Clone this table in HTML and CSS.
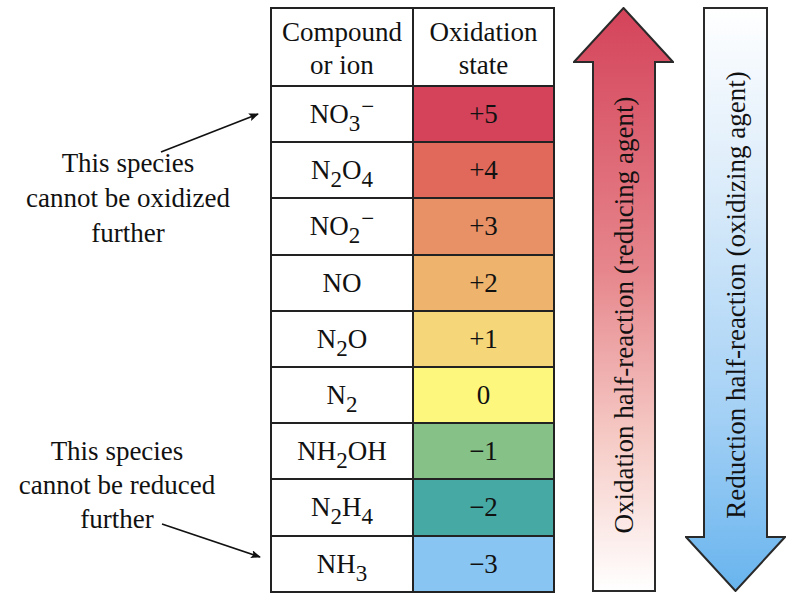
FILE: index.html
```html
<!DOCTYPE html>
<html>
<head>
<meta charset="utf-8">
<link rel="stylesheet" href="styles.css">
</head>
<body>
<div class="page">
  <div class="notes">
    <p class="note note-top">This species<br>cannot be oxidized<br>further</p>
    <p class="note note-bottom">This species<br>cannot be reduced<br>further</p>
  </div>
  <div class="table">
    <div class="cell head"><span class="txt">Compound<br>or ion</span></div>
    <div class="cell head"><span class="txt">Oxidation<br>state</span></div>
    <div class="cell"><span class="txt">NO<span class="sub">3</span><span class="sup">−</span></span></div>
    <div class="cell s5"><span class="txt">+5</span></div>
    <div class="cell"><span class="txt">N<span class="sub">2</span>O<span class="sub">4</span></span></div>
    <div class="cell s4"><span class="txt">+4</span></div>
    <div class="cell"><span class="txt">NO<span class="sub">2</span><span class="sup">−</span></span></div>
    <div class="cell s3"><span class="txt">+3</span></div>
    <div class="cell"><span class="txt">NO</span></div>
    <div class="cell s2"><span class="txt">+2</span></div>
    <div class="cell"><span class="txt">N<span class="sub">2</span>O</span></div>
    <div class="cell s1"><span class="txt">+1</span></div>
    <div class="cell"><span class="txt">N<span class="sub">2</span></span></div>
    <div class="cell s0"><span class="txt">0</span></div>
    <div class="cell"><span class="txt">NH<span class="sub">2</span>OH</span></div>
    <div class="cell m1"><span class="txt">−1</span></div>
    <div class="cell"><span class="txt">N<span class="sub">2</span>H<span class="sub">4</span></span></div>
    <div class="cell m2"><span class="txt">−2</span></div>
    <div class="cell"><span class="txt">NH<span class="sub">3</span></span></div>
    <div class="cell m3"><span class="txt">−3</span></div>
  </div>
  <div class="arrows">
    <div class="arrow arrow-up">
      <svg class="shape" width="101" height="585" viewBox="0 0 101 585">
        <defs>
          <linearGradient id="gup" x1="0" y1="0" x2="0" y2="1">
            <stop offset="0" stop-color="#d4435a"/>
            <stop offset="0.45" stop-color="#e6868c"/>
            <stop offset="0.75" stop-color="#f6cdc8"/>
            <stop offset="1" stop-color="#ffffff"/>
          </linearGradient>
        </defs>
        <polygon points="50.5,1 100,55 82,55 82,584 20,584 20,55 1,55" fill="url(#gup)" stroke="#2a2a2a" stroke-width="2" stroke-linejoin="miter"/>
      </svg>
      <span class="label label-up">Oxidation half-reaction (reducing agent)</span>
    </div>
    <div class="arrow arrow-down">
      <svg class="shape" width="101" height="585" viewBox="0 0 101 585">
        <defs>
          <linearGradient id="gdown" x1="0" y1="0" x2="0" y2="1">
            <stop offset="0" stop-color="#ffffff"/>
            <stop offset="0.3" stop-color="#dcecfa"/>
            <stop offset="0.7" stop-color="#a3d0f5"/>
            <stop offset="1" stop-color="#68b4ee"/>
          </linearGradient>
        </defs>
        <polygon points="19,1 82,1 82,530 100,530 50.5,584 1,530 19,530" fill="url(#gdown)" stroke="#2a2a2a" stroke-width="2" stroke-linejoin="miter"/>
      </svg>
      <span class="label label-down">Reduction half-reaction (oxidizing agent)</span>
    </div>
  </div>
  <svg class="pointers" width="800" height="600" viewBox="0 0 800 600">
    <defs>
      <marker id="head" markerWidth="10" markerHeight="8" refX="9" refY="4" orient="auto" markerUnits="userSpaceOnUse">
        <polygon points="0,0 10,4 0,8 2,4" fill="#111"/>
      </marker>
    </defs>
    <line x1="161" y1="152" x2="258" y2="114" stroke="#111" stroke-width="1.6" marker-end="url(#head)"/>
    <line x1="162" y1="524" x2="260" y2="557" stroke="#111" stroke-width="1.6" marker-end="url(#head)"/>
  </svg>
</div>
</body>
</html>
```

FILE: styles.css
```css
* { box-sizing: border-box; }
html, body { margin: 0; padding: 0; background: #ffffff; }
body {
  font-family: "Liberation Serif", "Times New Roman", Times, "DejaVu Serif", serif;
  color: #111;
  width: 800px;
  height: 600px;
  overflow: hidden;
}
.page {
  position: relative;
  display: flex;
  align-items: flex-start;
  padding-top: 7px;
  width: 800px;
  height: 600px;
}
.notes {
  width: 270px;
  flex: none;
  display: flex;
  flex-direction: column;
}
.note {
  margin: 0;
  font-size: 27px;
  text-align: center;
}
.note-top {
  margin-top: 139px;
  margin-left: 8px;
  width: 240px;
  line-height: 35px;
}
.note-bottom {
  margin-top: 183px;
  margin-left: 2px;
  width: 230px;
  line-height: 34px;
}
.table {
  flex: none;
  display: grid;
  grid-template-columns: 140px 139px;
  grid-template-rows: 76px repeat(9, 54.2px);
  gap: 2px;
  padding: 2px;
  background: #222;
  width: 285px;
}
.cell {
  background: #fff;
  display: flex;
  align-items: center;
  justify-content: center;
  text-align: center;
  font-size: 27px;
  line-height: 33px;
  padding-top: 1px;
}
.head { padding-top: 3px; }
.txt { display: block; }
.sub {
  font-size: 23px;
  line-height: 0;
  vertical-align: -8px;
}
.sup {
  font-size: 23px;
  line-height: 0;
  vertical-align: 9px;
  margin-left: 1px;
}
.s5 { background: #d4435a; }
.s4 { background: #e0695b; }
.s3 { background: #e89166; }
.s2 { background: #eeb36c; }
.s1 { background: #f5d77a; }
.s0 { background: #fdf77e; }
.m1 { background: #86c288; }
.m2 { background: #46a9a3; }
.m3 { background: #88c5f2; }
.arrows {
  display: flex;
  gap: 11px;
  margin-left: 18px;
}
.arrow {
  position: relative;
  width: 101px;
  height: 585px;
}
.shape {
  display: block;
}
.label {
  position: absolute;
  left: 50%;
  font-size: 27px;
  line-height: 1;
  white-space: nowrap;
  transform: translate(-50%, -50%) rotate(-90deg);
}
.label-up { top: 308px; }
.label-down { top: 288px; }
.pointers {
  position: absolute;
  left: 0;
  top: 0;
  pointer-events: none;
}
```
